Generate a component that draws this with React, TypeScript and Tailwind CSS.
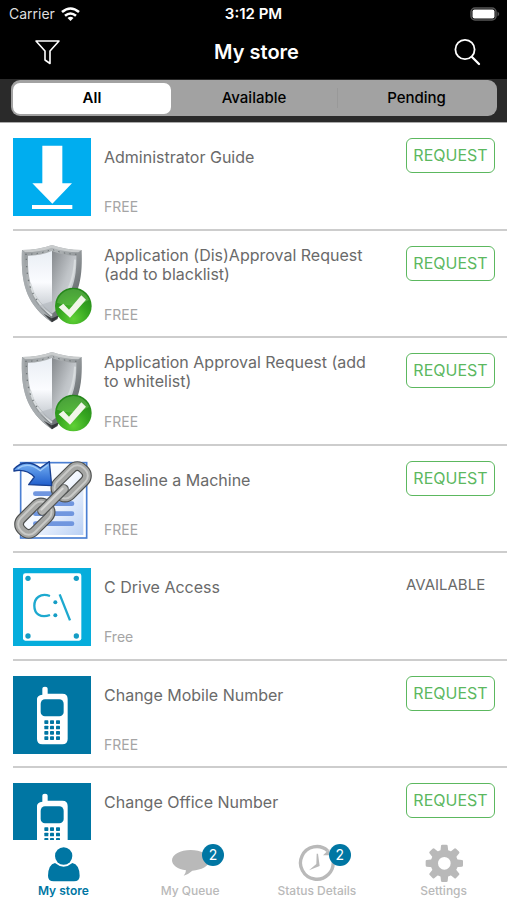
import { useState, type ReactNode } from "react";

function DownloadIcon() {
  return (
    <svg viewBox="39 38 234 234" className="size-full" aria-hidden="true">
      <rect x="39" y="38" width="234" height="234" fill="#00adef" />
      <path d="M127 61H187V174H216L157 235L97 174H127Z" fill="#fff" />
      <rect x="96" y="239" width="121" height="12" fill="#fff" />
    </svg>
  );
}

function ShieldIcon() {
  return (
    <svg viewBox="39 32 234 234" className="size-full overflow-visible" aria-hidden="true">
      <defs>
        <linearGradient id="rim" x1="0" y1="0" x2="1" y2="1">
          <stop offset="0" stopColor="#8b9093" />
          <stop offset=".3" stopColor="#b4b8ba" />
          <stop offset=".6" stopColor="#878c8f" />
          <stop offset="1" stopColor="#3f4447" />
        </linearGradient>
        <linearGradient id="faceLeft" x1="0" y1="0" x2="0" y2="1">
          <stop offset="0" stopColor="#e9eef4" />
          <stop offset=".5" stopColor="#fbfcff" />
          <stop offset="1" stopColor="#bcc2c8" />
        </linearGradient>
        <linearGradient id="faceRight" x1="0" y1="0" x2="1" y2="1">
          <stop offset="0" stopColor="#85898d" />
          <stop offset=".5" stopColor="#bfc3c7" />
          <stop offset="1" stopColor="#dde1e5" />
        </linearGradient>
        <radialGradient id="badge" cx=".5" cy=".85" r=".85">
          <stop offset="0" stopColor="#5fd135" />
          <stop offset=".5" stopColor="#35a51f" />
          <stop offset="1" stopColor="#23821a" />
        </radialGradient>
      </defs>
      <path d="M66 44Q115 44 156 29Q198 44 245 44C248 130 240 200 156 261C76 205 62 140 66 44Z" fill="url(#rim)" />
      <path d="M156 29Q198 44 245 44L235 51Q194 50 156 37Q119 50 76 51L66 44Q115 44 156 29Z" fill="#c9cccd" />
      <path d="M66 44L74 51C70 135 87 196 156 248V261C76 205 62 140 66 44Z" fill="#a7acaf" />
      <path d="M84 61Q124 61 156 47V235C98 186 82 142 84 61Z" fill="url(#faceLeft)" />
      <path d="M156 47Q190 61 229 61C231 144 210 194 156 235Z" fill="url(#faceRight)" />
      <path d="M91 145C99 183 118 211 156 241M225 73C222 135 202 174 184 190" fill="none" stroke="#d8dcde" strokeWidth="6" />
      <path d="M76 57Q119 57 156 42Q193 57 237 57" fill="none" stroke="#656b6e" strokeWidth="3" strokeDasharray="4 13" />
      <path d="M79 70C80 132 91 173 120 205" fill="none" stroke="#71777a" strokeWidth="4" strokeDasharray="4 17" />
      <path d="M113 211L156 198V236Z" fill="#aeb4b9" opacity=".55" />
      <path d="M131 235L156 249L174 241L173 251L156 261Z" fill="#25282a" opacity=".8" />
      <circle cx="220" cy="212" r="55" fill="url(#badge)" />
      <path d="M171 202A50 50 0 0 1 267 194Q219 222 171 202Z" fill="#8bd374" opacity=".35" />
      <path d="M176 216L190 205L207 223L244 180L258 193L210 247Z" fill="#f1f6e9" />
    </svg>
  );
}

function LinkIcon() {
  return (
    <svg viewBox="39 32 234 234" className="size-full overflow-visible" aria-hidden="true">
      <defs>
        <linearGradient id="page" x1="0" y1="0" x2="1" y2="1">
          <stop offset="0" stopColor="#fff" />
          <stop offset=".5" stopColor="#f4f8ff" />
          <stop offset="1" stopColor="#b9d0f4" />
        </linearGradient>
        <linearGradient id="arrow" x1="0" y1="0" x2="0" y2="1">
          <stop offset="0" stopColor="#79b4f5" />
          <stop offset="1" stopColor="#1e5ccb" />
        </linearGradient>
      </defs>
      <rect x="62" y="37" width="198" height="226" fill="#fff" stroke="#4a7fd3" strokeWidth="5" />
      <rect x="71" y="46" width="179" height="208" fill="url(#page)" />
      <path d="M106 130H216M106 160H216M106 190H216M106 220H216" stroke="#7096df" strokeWidth="14" strokeLinecap="round" />
      <g transform="rotate(-45 159 149)" fill="none">
        <g stroke="#4e504f" strokeWidth="30">
          <rect x="183" y="122" width="106" height="54" rx="23" />
          <rect x="29" y="122" width="106" height="54" rx="23" />
        </g>
        <g stroke="#a5a6a4" strokeWidth="23">
          <rect x="183" y="122" width="106" height="54" rx="23" />
          <rect x="29" y="122" width="106" height="54" rx="23" />
        </g>
        <g stroke="#c9cac8" strokeWidth="6">
          <rect x="180" y="119" width="112" height="60" rx="26" />
          <rect x="26" y="119" width="112" height="60" rx="26" />
        </g>
        <path d="M113 149H205" stroke="#555756" strokeWidth="30" strokeLinecap="round" />
        <path d="M113 149H205" stroke="#b3b4b2" strokeWidth="23" strokeLinecap="round" />
        <path d="M114 145H204" stroke="#d7d7d5" strokeWidth="6" strokeLinecap="round" />
      </g>
      <path d="M42 56C62 34 92 31 121 53L148 34L155 106L86 103L103 80C86 62 65 57 42 62Z" fill="url(#arrow)" stroke="#173f91" strokeWidth="4" strokeLinejoin="round" />
      <path d="M53 55C77 38 99 44 121 61L143 44" fill="none" stroke="#a1cbf8" strokeWidth="4" />
    </svg>
  );
}

function DriveIcon() {
  return (
    <svg viewBox="39 23 234 234" className="size-full" aria-hidden="true">
      <rect x="39" y="23" width="234" height="234" fill="#06addc" />
      <rect x="69" y="39" width="175" height="202" rx="7" fill="#fff" />
      <g fill="#159dc5">
        <circle cx="84" cy="54" r="8" />
        <circle cx="229" cy="54" r="8" />
        <circle cx="84" cy="227" r="8" />
        <circle cx="229" cy="227" r="8" />
        <circle cx="166" cy="126" r="6" />
        <circle cx="166" cy="165" r="6" />
      </g>
      <path d="M150 107C121 97 103 113 103 136C103 161 122 174 150 164M179 102L210 180" fill="none" stroke="#1da9cf" strokeWidth="7" />
    </svg>
  );
}

function PhoneIcon() {
  const keys = [133, 150, 168].flatMap((x) => [163, 179, 195, 211].map((y) => ({ x, y })));
  return (
    <svg viewBox="39 30 234 234" className="size-full" aria-hidden="true">
      <rect x="39" y="30" width="234" height="234" fill="#0076a3" />
      <path d="M127 86V69Q127 62 135 62Q143 62 143 69V83H187Q203 83 203 99V219Q203 235 187 235H127Q111 235 111 219V99Q111 88 127 86Z" fill="#fff" />
      <rect x="122" y="100" width="69" height="51" rx="13" fill="#0076a3" />
      {keys.map(({ x, y }) => (
        <rect key={`${x}-${y}`} x={x} y={y} width="12" height="11" rx="2" fill="#0076a3" />
      ))}
    </svg>
  );
}

type Item = { title: string; price: string; icon: ReactNode; available?: boolean };

const items: Item[] = [
  { title: "Administrator Guide", price: "FREE", icon: <DownloadIcon /> },
  { title: "Application (Dis)Approval Request (add to blacklist)", price: "FREE", icon: <ShieldIcon /> },
  { title: "Application Approval Request (add to whitelist)", price: "FREE", icon: <ShieldIcon /> },
  { title: "Baseline a Machine", price: "FREE", icon: <LinkIcon /> },
  { title: "C Drive Access", price: "Free", icon: <DriveIcon />, available: true },
  { title: "Change Mobile Number", price: "FREE", icon: <PhoneIcon /> },
  { title: "Change Office Number", price: "FREE", icon: <PhoneIcon /> },
];

function StoreRow({ item }: { item: Item }) {
  return (
    <li className="ml-[13px] flex shrink-0 border-b-2 border-[#cdcdcd] pt-[15px] odd:h-[108px] even:h-[107px]">
      <div className="size-[78px] shrink-0">{item.icon}</div>
      <div className="ml-[13px] min-w-0 flex-1">
        <h2 className="flex h-[38px] items-center text-[16px] leading-[19px] text-[#6a6a6a]">{item.title}</h2>
        <p className="mt-[21px] text-[14px] leading-5 text-[#a5a5a5]">{item.price}</p>
      </div>
      <div className="ml-6 mr-3 w-[89px] shrink-0">
        {item.available ? (
          <p className="text-[15px] leading-[34px] text-[#6a6a6a]">AVAILABLE</p>
        ) : (
          <button type="button" className="h-[35px] w-full rounded-[6px] border border-[#5cb85f] text-[16px] leading-[33px] text-[#5cb85f]">
            REQUEST
          </button>
        )}
      </div>
    </li>
  );
}

const gearTeeth = [0, 45, 90, 135, 180, 225, 270, 315];

const tabs = [
  {
    label: "My store",
    viewBox: "132 39 120 120",
    drawing: (
      <>
        <circle cx="194" cy="78" r="26" />
        <path d="M168 99Q194 121 220 99Q241 103 242 137Q242 154 225 154H164Q147 154 147 137Q148 103 168 99Z" />
      </>
    ),
  },
  {
    label: "My Queue",
    viewBox: "511 39 120 120",
    count: 2,
    drawing: <path d="M573 60C604 60 629 73 629 91C629 108 605 121 578 122Q566 133 552 137Q559 129 559 121C534 118 517 106 517 91C517 73 542 60 573 60Z" />,
  },
  {
    label: "Status Details",
    viewBox: "132 39 120 120",
    count: 2,
    drawing: (
      <>
        <path d="M224 62A49 49 0 1 0 240 92" fill="none" stroke="currentColor" strokeWidth="10" />
        <path d="M210 76L229 58V76ZM191 71H195L200 108L168 121L190 102Z" />
      </>
    ),
  },
  {
    label: "Settings",
    viewBox: "512 39 120 120",
    drawing: (
      <>
        {gearTeeth.map((angle) => (
          <path key={angle} d="M561 66L563 47Q563 44 567 44H579Q583 44 583 47L585 66Z" transform={`rotate(${angle} 573 100)`} />
        ))}
        <circle cx="573" cy="100" r="30" fill="none" stroke="currentColor" strokeWidth="22" />
      </>
    ),
  },
];

const filters = ["All", "Available", "Pending"];

export default function App() {
  const [filter, setFilter] = useState("All");
  const [tab, setTab] = useState("My store");

  return (
    <div className="flex h-screen flex-col bg-white font-['Inter',sans-serif]">
      <header className="shrink-0 bg-black text-white">
        <div className="grid h-7 grid-cols-3 items-center px-[9px] text-[14px] leading-4">
          <div className="flex items-center gap-[6px]">
            <span className="text-[#dedede]">Carrier</span>
            <svg viewBox="0 0 19 14" className="h-[14px] w-[19px]" fill="none" stroke="currentColor" strokeWidth="2.600" aria-hidden="true">
              <path d="M1 5Q9.500-2 18 5M4 8.800Q9.500 4.200 15 8.800" />
              <path d="M6.500 11Q9.500 8.500 12.500 11L9.500 14Z" fill="currentColor" stroke="none" />
            </svg>
          </div>
          <span className="text-center text-[15px] font-semibold">3:12 PM</span>
          <svg viewBox="0 0 30 14" className="-mr-[2px] h-[14px] w-[30px] justify-self-end" aria-hidden="true">
            <rect x="1" y="1" width="25" height="12" rx="4" fill="none" stroke="#555" strokeWidth="1.500" />
            <rect x="2.500" y="2.500" width="22" height="9" rx="2" fill="#fff" />
            <path d="M27.500 4.500Q31 7 27.500 9.500Z" fill="#555" />
          </svg>
        </div>
        <div className="flex h-[51px] items-center justify-between pl-[34px] pr-[26px] pb-[3px]">
          <button type="button" aria-label="Filter">
            <svg viewBox="0 0 26 26" className="size-[26px]" fill="none" stroke="currentColor" strokeWidth="1.600" strokeLinejoin="round" aria-hidden="true">
              <path d="M2 2H25L16 12V24.500L11 21V12Z" />
            </svg>
          </button>
          <h1 className="text-[20px] font-semibold leading-6">My store</h1>
          <button type="button" aria-label="Search">
            <svg viewBox="0 0 28 28" className="size-7" fill="none" stroke="currentColor" strokeWidth="1.800" strokeLinecap="round" aria-hidden="true">
              <circle cx="12" cy="11.500" r="9.600" />
              <path d="M19 19L26 26" strokeWidth="2.300" />
            </svg>
          </button>
        </div>
      </header>

      <div className="h-11 shrink-0 border-b border-[#aaa] bg-[#2a2a2a] pl-[11px] pr-[10px] pt-px">
        <div className="grid h-9 grid-cols-3 items-center gap-1 rounded-[9px] bg-[#a2a2a2] p-[2px]">
          {filters.map((name) => (
            <button
              key={name}
              type="button"
              aria-pressed={filter === name}
              onClick={() => setFilter(name)}
              className={`text-[15px] leading-5 text-black ${
                filter === name ? "h-[31px] rounded-[7px] bg-white font-semibold" : "h-5 font-medium"
              } ${name === "Pending" ? "border-l border-[#999]" : ""}`}
            >
              {name}
            </button>
          ))}
        </div>
      </div>

      <ul className="flex min-h-0 flex-1 flex-col overflow-y-auto [scrollbar-width:none]">
        {items.map((item) => (
          <StoreRow key={item.title} item={item} />
        ))}
      </ul>

      <nav className="grid h-[60px] shrink-0 grid-cols-4 bg-white">
        {tabs.map(({ label, viewBox, drawing, count }) => (
          <button
            key={label}
            type="button"
            onClick={() => setTab(label)}
            className={`flex flex-col items-center pt-[3px] ${tab === label ? "text-[#0076a3]" : "text-[#b9b9b9]"}`}
          >
            <span className="relative size-10">
              <svg viewBox={viewBox} className="size-full" fill="currentColor" aria-hidden="true">
                {drawing}
              </svg>
              {count && (
                <span className="absolute left-8 top-px flex size-[22px] items-center justify-center rounded-full bg-[#0076a3] text-[14px] leading-none text-white">
                  {count}
                </span>
              )}
            </span>
            <span className={`text-[12px] leading-4 ${tab === label ? "font-semibold" : "font-medium"}`}>{label}</span>
          </button>
        ))}
      </nav>
    </div>
  );
}
